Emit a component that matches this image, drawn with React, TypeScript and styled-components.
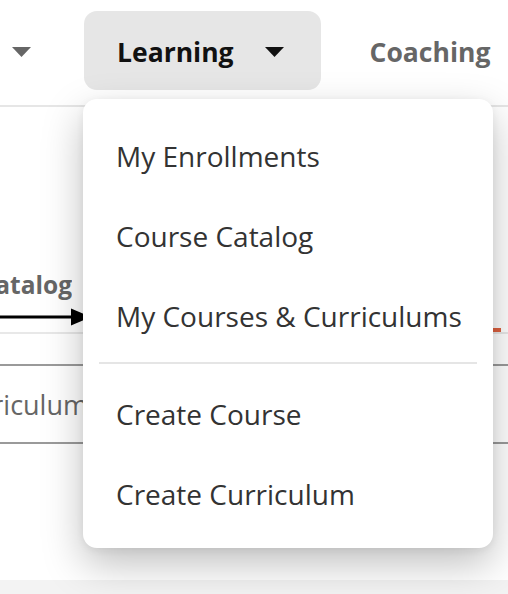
import styled, { createGlobalStyle } from 'styled-components';

const GlobalStyle = createGlobalStyle`
  html, body {
    margin: 0;
    padding: 0;
    background: #ffffff;
    font-family: "Open Sans", "Noto Sans", sans-serif;
  }
  * {
    box-sizing: border-box;
  }
`;

const menuGroups = [
  ['My Enrollments', 'Course Catalog', 'My Courses & Curriculums'],
  ['Create Course', 'Create Curriculum'],
];

function Caret({ color }: { color: string }) {
  return (
    <svg width="19" height="10" viewBox="0 0 19 10">
      <path d="M0 0 H19 L9.5 10 Z" fill={color} />
    </svg>
  );
}

export default function App() {
  return (
    <Page>
      <GlobalStyle />
      <Nav>
        <Caret color="#666666" />
        <NavButton $active>
          Learning
          <Caret color="#111111" />
        </NavButton>
        <NavLink>Coaching</NavLink>
      </Nav>

      <Content>
        <TabClip>
          <TabLabel>Course Catalog</TabLabel>
        </TabClip>
        <Arrow width="92" height="18" viewBox="0 0 92 18">
          <path d="M0 9 H76" stroke="#000" strokeWidth="3" />
          <path d="M71 0.5 L91 9 L71 17.5 Z" fill="#000" />
        </Arrow>
        <Underline>
          <ActiveBar />
        </Underline>
        <SearchBox>
          <SearchClip>
            <SearchText>Search Curriculum</SearchText>
          </SearchClip>
        </SearchBox>
      </Content>

      <Footer />

      <Menu>
        {menuGroups.map((group, i) => (
          <MenuGroup key={i}>
            {i > 0 && <Divider />}
            {group.map((label) => (
              <MenuItem key={label}>{label}</MenuItem>
            ))}
          </MenuGroup>
        ))}
      </Menu>
    </Page>
  );
}

const Page = styled.div`
  position: relative;
  width: 508px;
  height: 594px;
  overflow: hidden;
  display: flex;
  flex-direction: column;
`;

const Nav = styled.nav`
  height: 107px;
  flex-shrink: 0;
  display: flex;
  align-items: flex-start;
  padding: 11px 0 0 12px;
  border-bottom: 2px solid #e6e6e6;

  > svg {
    margin-top: 36px;
  }
`;

const NavButton = styled.div<{ $active?: boolean }>`
  margin-left: 53px;
  height: 79px;
  display: flex;
  align-items: center;
  gap: 31px;
  padding: 2px 37px 0 33px;
  border-radius: 13px;
  background: ${(p) => (p.$active ? '#e6e6e6' : 'transparent')};
  color: #111111;
  font-size: 26.5px;
  font-weight: 700;
  white-space: nowrap;
`;

const NavLink = styled.div`
  margin-left: 49px;
  height: 79px;
  display: flex;
  align-items: center;
  padding-top: 2px;
  color: #666666;
  font-size: 26.5px;
  font-weight: 700;
  white-space: nowrap;
`;

const Content = styled.main`
  flex: 1;
  display: flex;
  flex-direction: column;
`;

const TabClip = styled.div`
  width: 72px;
  margin-top: 162px;
  display: flex;
  justify-content: flex-end;
  overflow: hidden;
`;

const TabLabel = styled.span`
  font-size: 24.5px;
  line-height: 32px;
  font-weight: 700;
  color: #666666;
  white-space: nowrap;
`;

const Arrow = styled.svg`
  display: block;
  margin-top: 7px;
`;

const Underline = styled.div`
  height: 8px;
  display: flex;
  justify-content: flex-end;
  align-items: flex-end;
  border-bottom: 2px solid #e8e8e8;
`;

const ActiveBar = styled.div`
  width: 8px;
  height: 4px;
  margin-right: 7px;
  background: #dd6140;
`;

const SearchBox = styled.div`
  margin-top: 30px;
  height: 80px;
  display: flex;
  align-items: center;
  border-top: 2px solid #9a9a9a;
  border-bottom: 2px solid #9a9a9a;
`;

const SearchClip = styled.div`
  width: 88px;
  display: flex;
  justify-content: flex-end;
  overflow: hidden;
`;

const SearchText = styled.span`
  font-size: 27px;
  color: #666666;
  white-space: nowrap;
`;

const Footer = styled.footer`
  height: 14px;
  flex-shrink: 0;
  background: #f3f3f3;
`;

const Menu = styled.div`
  position: absolute;
  top: 99px;
  left: 83px;
  width: 410px;
  padding: 17px 0 14px;
  background: #ffffff;
  border-radius: 14px;
  box-shadow: 0 16px 40px rgba(0, 0, 0, 0.25), 0 2px 8px rgba(0, 0, 0, 0.06);
`;

const MenuGroup = styled.div`
  display: flex;
  flex-direction: column;
`;

const Divider = styled.hr`
  margin: 6px 16px 10px;
  border: none;
  height: 2px;
  background: #e5e5e5;
`;

const MenuItem = styled.div`
  height: 80px;
  display: flex;
  align-items: center;
  padding-left: 33px;
  font-size: 28px;
  color: #333333;
  white-space: nowrap;
`;
